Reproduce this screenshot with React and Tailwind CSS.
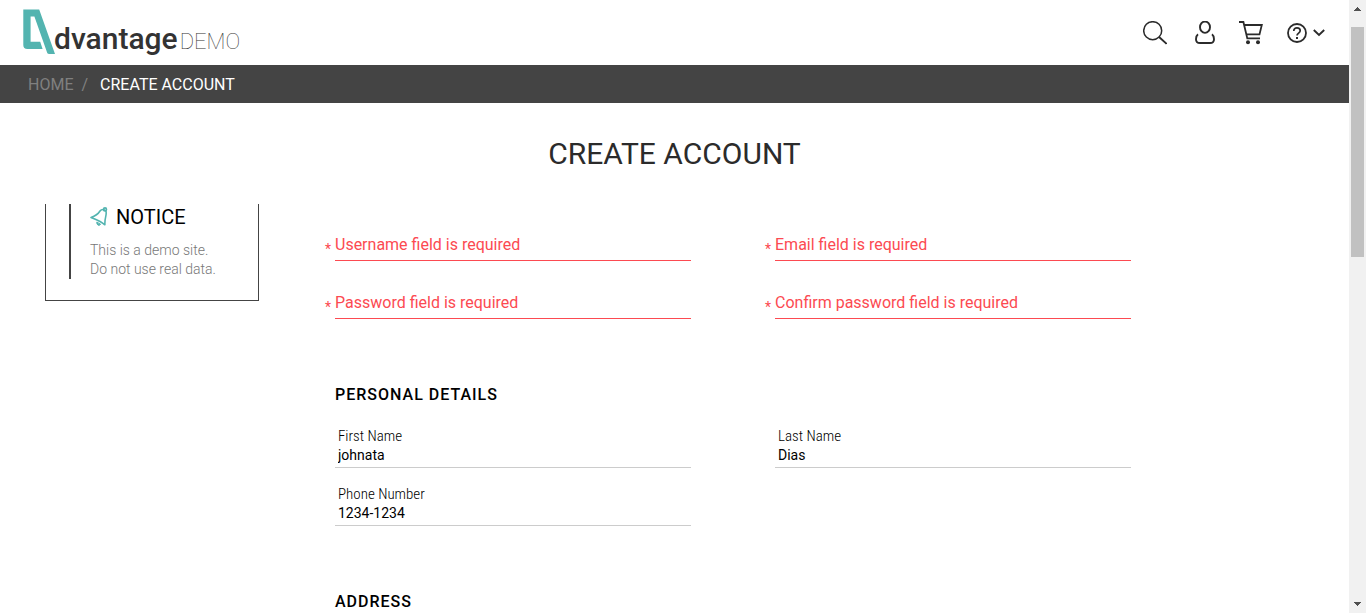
import React from "react";

function Logo() {
  return (
    <a href="#home" aria-label="Advantage Demo" className="flex items-start pt-1 text-[#333333]">
      <svg width="33" height="46" viewBox="0 0 33 46" aria-hidden="true">
        <path
          fill="#53b4b0"
          d="M0.3 0.5H16.2L32 45H26C24.8 45 24.3 44.3 24 43.3L11.4 7.4H7.6V32.8H17.2L19.6 40H4.4Q0.3 40 0.3 36Z"
        />
      </svg>
      <span className="-ml-0.5 flex items-baseline pt-3">
        <span className="text-3xl leading-9 font-medium">dvantage</span>
        <span className="ml-0.5 text-[22px] leading-9 font-thin">DEMO</span>
      </span>
    </a>
  );
}

function HeaderIcons() {
  return (
    <nav className="flex items-center text-[#2b2b2b]">
      <button type="button" aria-label="Search" className="mr-7">
        <svg width="24" height="24" viewBox="0 0 24 24" fill="none" stroke="currentColor" strokeWidth="1.5">
          <circle cx="9.7" cy="9.7" r="9" />
          <path d="M15.8 15.8 23.6 22.8" strokeWidth="1.9" />
        </svg>
      </button>
      <button type="button" aria-label="User" className="mr-6">
        <svg width="20" height="24" viewBox="0 0 20 24" fill="none" stroke="currentColor" strokeWidth="1.9">
          <ellipse cx="10" cy="6.2" rx="5" ry="5.7" />
          <path d="M3 13.2C1.4 14.4 1 16.4 1 18.2 1 20.8 2.6 22 5 22H15C17.4 22 19 20.8 19 18.2 19 16.4 18.6 14.4 17 13.2" />
        </svg>
      </button>
      <button type="button" aria-label="Shopping cart" className="mr-6">
        <svg width="24" height="24" viewBox="0 0 24 24" fill="none" stroke="currentColor" strokeWidth="1.8">
          <path d="M0 1H4.4L8.3 17.4H21" />
          <path d="M5.2 4H22.8L20.5 13.4H7.4" />
          <circle cx="9" cy="21.200" r="2" fill="currentColor" stroke="none" />
          <circle cx="19" cy="21.200" r="2" fill="currentColor" stroke="none" />
        </svg>
      </button>
      <button type="button" aria-label="Help" className="flex items-center gap-1.5">
        <svg width="20" height="20" viewBox="0 0 20 20" fill="none" stroke="currentColor" strokeWidth="1.8">
          <circle cx="10" cy="10" r="9" />
          <path d="M6.8 8C6.8 5.9 8.1 4.8 10 4.8S13.2 6 13.2 7.7C13.2 10 10 10.2 10 12.6" strokeWidth="1.7" />
          <path d="M10 13.9V15.9" strokeWidth="2" />
        </svg>
        <svg width="12" height="8" viewBox="0 0 12 8" fill="none" stroke="currentColor" strokeWidth="1.9">
          <path d="M0.8 1 6 5.9 11.2 1" />
        </svg>
      </button>
    </nav>
  );
}

function RequiredField({ id, type, message }) {
  return (
    <div className="relative grid h-[42px] text-[#fc4a51]">
      <span aria-hidden="true" className="absolute top-5 -left-2.5 text-sm leading-5">*</span>
      <label htmlFor={id} className="col-start-1 row-start-1 pt-4 text-base leading-5">
        {message}
      </label>
      <input
        id={id}
        type={type}
        className="col-start-1 row-start-1 w-full border-b border-[#fc4a51] bg-transparent outline-none"
      />
    </div>
  );
}

function Field({ id, label, value }) {
  return (
    <div className="flex h-[42px] flex-col">
      <label
        htmlFor={id}
        className="px-[3px] font-['Roboto_Condensed',Roboto,sans-serif] text-[15px] leading-5 font-light text-black"
      >
        {label}
      </label>
      <input
        id={id}
        type="text"
        defaultValue={value}
        className="h-[22px] w-full border-b border-[#cccccc] bg-transparent px-[3px] pb-[3px] text-sm text-black outline-none"
      />
    </div>
  );
}

function Section({ title, children }) {
  return (
    <section className="mt-16">
      <h2 className="text-base leading-6 font-medium tracking-[1px] text-black">{title}</h2>
      {children && <div className="mt-[19px] grid grid-cols-2 gap-x-[84px] gap-y-4">{children}</div>}
    </section>
  );
}

function Notice() {
  return (
    <aside className="ml-[45px] w-[214px] shrink-0 self-start border-x border-b border-[#444444] pb-[21px] pl-[23px]">
      <div className="border-l-2 border-[#444444] pl-[19px]">
        <div className="flex items-center gap-2">
          <svg
            width="18"
            height="20"
            viewBox="0 0 18 20"
            fill="none"
            stroke="#53b4b0"
            strokeWidth="1.6"
            strokeLinejoin="round"
            strokeLinecap="round"
            aria-hidden="true"
          >
            <path d="M1 10.4C6 8.8 8.4 6.6 10 4 11.4 2 15 1.8 16 4.4 17 8.4 14.4 11 14.9 17.8 10.4 13.8 5.4 12.4 1 10.4Z" />
            <circle cx="15" cy="2.4" r="1.5" />
            <path d="M6.8 15.4C6.6 18 9 19.4 10.4 17.6Z" fill="#53b4b0" strokeWidth="1" />
          </svg>
          <h3 className="text-xl leading-[26px] text-black">NOTICE</h3>
        </div>
        <p className="mt-[11px] text-sm leading-[19px] font-light text-[#777777]">
          This is a demo site.
          <br />
          Do not use real data.
        </p>
      </div>
    </aside>
  );
}

function ScrollRail() {
  return (
    <div aria-hidden="true" className="flex w-[17px] shrink-0 flex-col items-center bg-[#f1f1f1]">
      <svg width="17" height="17" viewBox="0 0 17 17" fill="#505050" shapeRendering="crispEdges">
        <path d="M5 11H12L8.500 7Z" />
      </svg>
      <div className="mt-2.5 h-[230px] w-[13px] bg-[#c1c1c1]" />
      <svg className="mt-auto" width="17" height="17" viewBox="0 0 17 17" fill="#505050" shapeRendering="crispEdges">
        <path d="M5 6H12L8.500 10Z" />
      </svg>
    </div>
  );
}

export default function App() {
  return (
    <div className="flex h-screen overflow-hidden bg-white font-[Roboto,sans-serif]">
      <div className="min-w-0 flex-1 overflow-hidden">
        <header className="flex h-[65px] items-center justify-between pr-6 pl-[23px]">
          <Logo />
          <HeaderIcons />
        </header>
        <nav
          aria-label="Breadcrumb"
          className="flex h-[38px] items-center bg-[#444444] pt-0.5 pl-7 text-base leading-6 whitespace-pre text-[#808080]"
        >
          <a href="#home">HOME</a>
          <span className="ml-2">/</span>
          <span className="ml-3 text-white">CREATE ACCOUNT</span>
        </nav>
        <main className="pt-[31px]">
          <h1 className="text-center text-3xl leading-10 text-[#2b2b2b]">CREATE ACCOUNT</h1>
          <div className="mt-[30px] flex">
            <Notice />
            <form className="mr-[218px] ml-[76px] min-w-0 flex-1 pt-[15px]">
              <div className="grid grid-cols-2 gap-x-[84px] gap-y-4">
                <RequiredField id="username" type="text" message="Username field is required" />
                <RequiredField id="email" type="email" message="Email field is required" />
                <RequiredField id="password" type="password" message="Password field is required" />
                <RequiredField id="confirm" type="password" message="Confirm password field is required" />
              </div>
              <Section title="PERSONAL DETAILS">
                <Field id="first-name" label="First Name" value="johnata" />
                <Field id="last-name" label="Last Name" value="Dias" />
                <Field id="phone" label="Phone Number" value="1234-1234" />
              </Section>
              <Section title="ADDRESS" />
            </form>
          </div>
        </main>
      </div>
      <ScrollRail />
    </div>
  );
}
